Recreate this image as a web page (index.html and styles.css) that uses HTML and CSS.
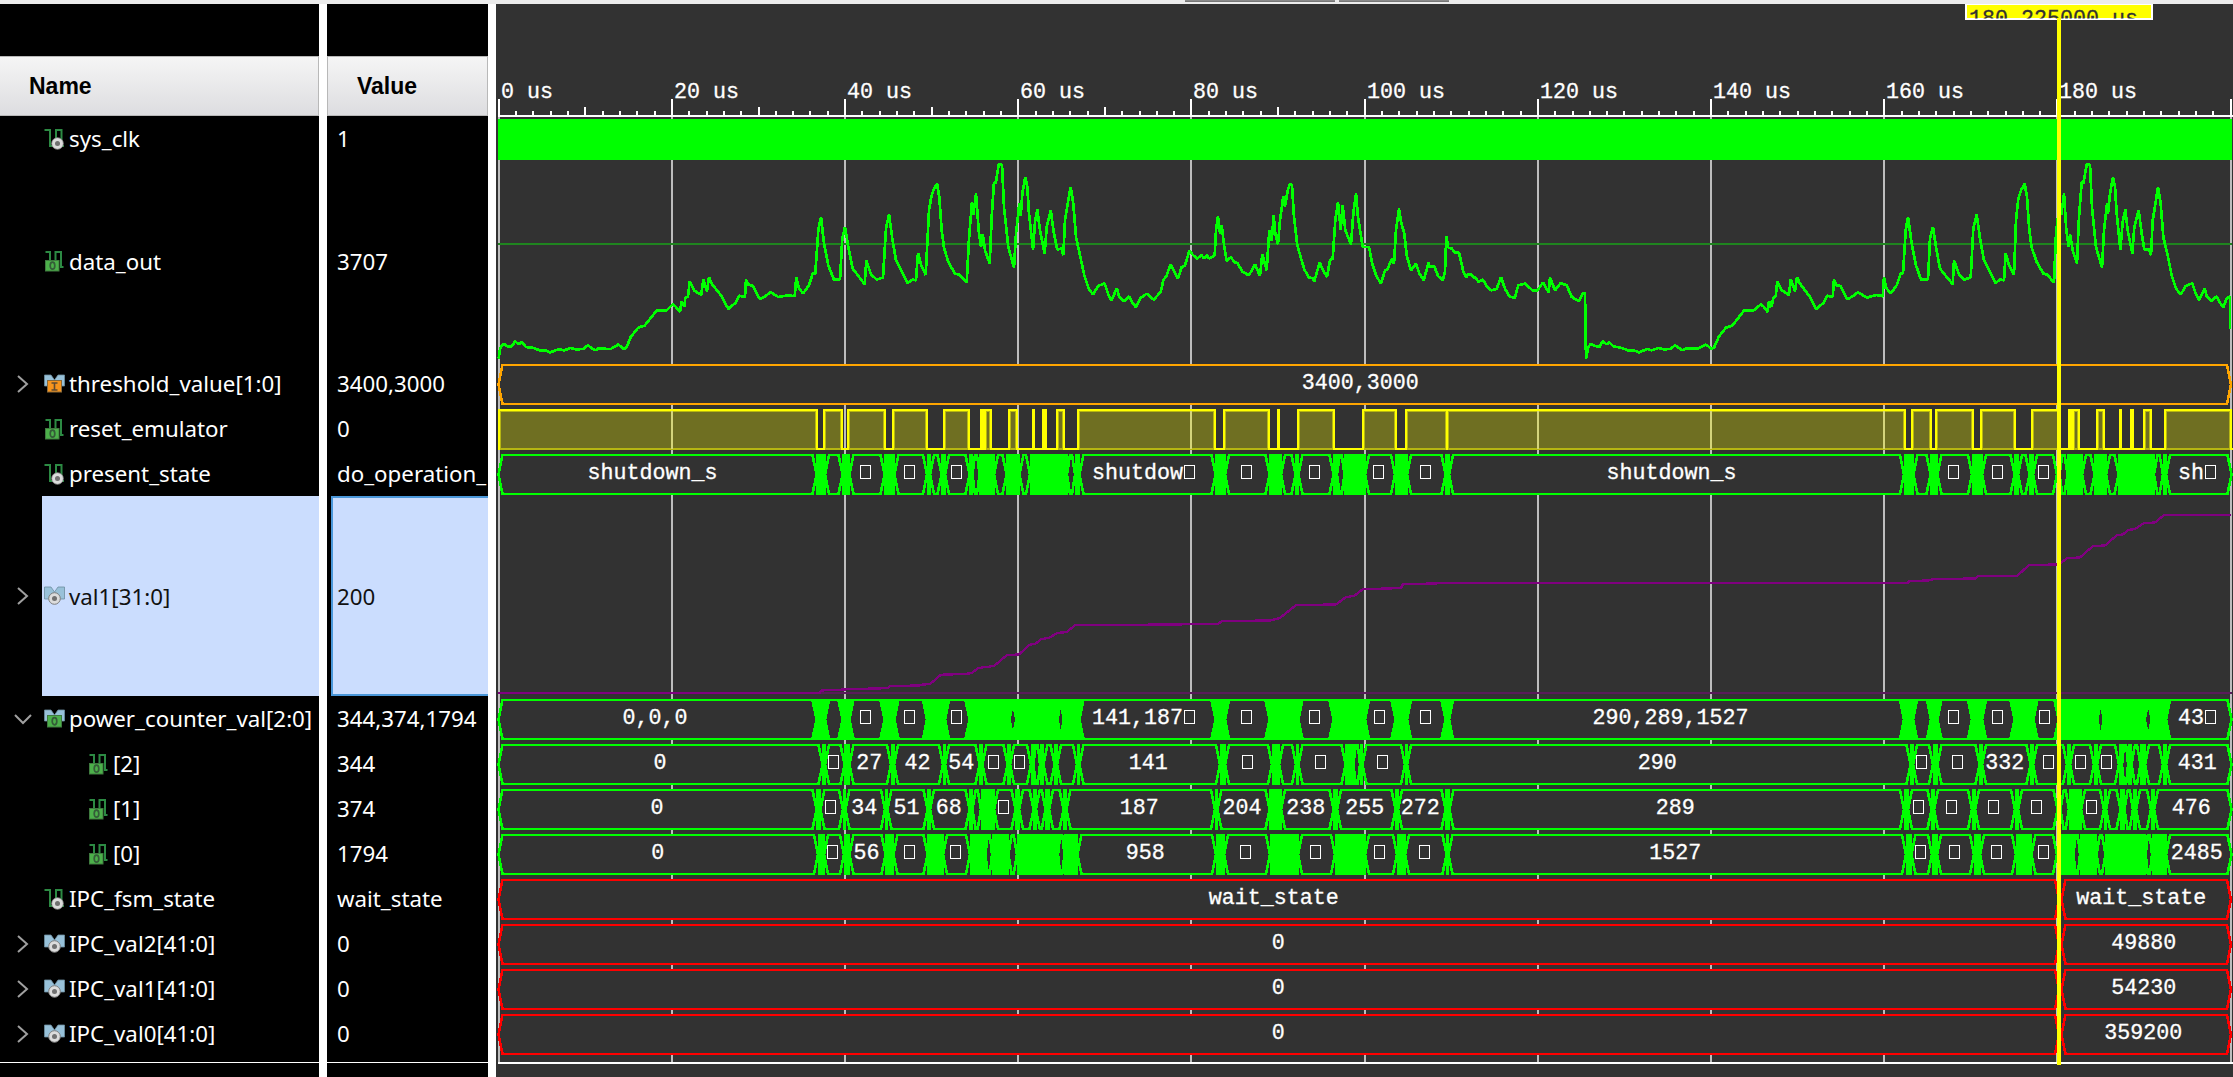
FILE: index.html
```html
<!DOCTYPE html>
<html lang="en">
<head>
<meta charset="utf-8">
<title>Waveform</title>
<link rel="stylesheet" href="styles.css">
</head>
<body>
<svg class="defs" width="0" height="0" aria-hidden="true">
  <symbol id="i-chev" viewBox="0 0 20 20"><path d="M5 2 L14 10 L5 18" fill="none" stroke="#a0a0a0" stroke-width="2"/></symbol>
  <symbol id="i-down" viewBox="0 0 20 20"><path d="M2 6 L10 14 L18 6" fill="none" stroke="#a0a0a0" stroke-width="2"/></symbol>
  <symbol id="i-sig" viewBox="0 0 21 22">
    <path d="M0.5 2 H6 V18 H12 V2 H17.5 V18 H20" fill="none" stroke="#2c8a43" stroke-width="2"/>
    <circle cx="13.5" cy="15.5" r="5.8" fill="#dcdcdc" stroke="#8b8b8b" stroke-width=".8"/><circle cx="13.5" cy="15.5" r="2.5" fill="#707070"/>
  </symbol>
  <symbol id="i-out" viewBox="0 0 21 22">
    <path d="M1.5 2 H6 V14 M11.5 14 V2 H17 V17 H19.5" fill="none" stroke="#2c8a43" stroke-width="2"/>
    <rect x="1.5" y="10.500" width="13.500" height="10.500" fill="#4cb04a" stroke="#3f7a3f"/>
    <ellipse cx="8.500" cy="15.700" rx="2.300" ry="3.500" fill="none" stroke="#345c38" stroke-width="1.700"/>
  </symbol>
  <symbol id="i-bus" viewBox="0 0 21 22">
    <path d="M0.500 2 H7 L10.500 7 L14 2 H20.500 V14 H.5Z" fill="#98c1d9" stroke="#6d8ea0" stroke-width=".8"/>
    <circle cx="10.500" cy="13.500" r="5.800" fill="#dcdcdc" stroke="#7d7d7d" stroke-width="1"/><circle cx="10.500" cy="13.500" r="2.500" fill="#707070"/>
  </symbol>
  <symbol id="i-busin" viewBox="0 0 21 22">
    <path d="M0.500 2 H7 L10.500 7 L14 2 H20.500 V13 H.5Z" fill="#98c1d9" stroke="#6d8ea0" stroke-width=".8"/>
    <rect x="3.500" y="7.500" width="14" height="11.500" fill="#f7941d" stroke="#8a6a3a"/>
    <path d="M7.500 10 H13.500 M10.500 10 V17 M7.500 17 H13.500" fill="none" stroke="#5e4a32" stroke-width="1.600"/>
  </symbol>
  <symbol id="i-busout" viewBox="0 0 21 22">
    <path d="M0.500 2 H7 L10.500 7 L14 2 H20.500 V13 H.5Z" fill="#98c1d9" stroke="#6d8ea0" stroke-width=".8"/>
    <rect x="3.500" y="7.500" width="14" height="11.500" fill="#4cb04a" stroke="#3f7a3f"/>
    <ellipse cx="10.500" cy="13.200" rx="2.300" ry="3.600" fill="none" stroke="#345c38" stroke-width="1.700"/>
  </symbol>
</svg>
<div class="strip"><i class="tab tab-a"></i><i class="tab tab-b"></i></div>
<main class="app">
  <section class="panel names">
    <div class="blank"></div>
    <div class="head">Name</div>
    <div class="rows" id="names"></div>
    <div class="foot"></div>
  </section>
  <section class="panel values">
    <div class="blank"></div>
    <div class="head">Value</div>
    <div class="rows" id="values"></div>
    <div class="foot"></div>
  </section>
  <section class="wave">
    <svg class="grid" id="grid" viewBox="496 4 1737 1073"></svg>
    <div class="ruler"><svg id="ruler" viewBox="496 4 1737 115"></svg></div>
    <div class="waves" id="waves"></div>
    <svg class="cursor" viewBox="1965 4 188 1061">
      <rect x="1965" y="4" width="188" height="16" fill="#fff"/>
      <rect x="1967" y="5" width="184" height="13" fill="#ff0"/>
      <clipPath id="flag"><rect x="1967" y="5" width="184" height="13.500"/></clipPath>
      <g clip-path="url(#flag)"><text class="dark" x="1969" y="25">180.225000 us</text></g>
      <rect x="2057" y="18" width="4" height="1047" fill="#ff0"/>
    </svg>
  </section>
</main>
<script src="wave.js"></script>
</body>
</html>
```
FILE: styles.css
```css
* { box-sizing: border-box; }
body { margin: 0; width: 2233px; height: 1077px; overflow: hidden; background: #fff; display: flex; flex-direction: column; font-family: "Noto Sans", sans-serif; }
.defs { position: absolute; }
.strip { height: 4px; flex: none; background: #ececec; display: flex; gap: 4px; padding-left: 1185px; }
.tab { height: 2px; background: #8a8a8a; border-bottom: 1px solid #777; }
.tab-a { width: 150px; }
.tab-b { width: 110px; }
.app { flex: 1; display: flex; gap: 8px; min-height: 0; }
.panel { background: #000; color: #fff; display: flex; flex-direction: column; flex: none; overflow: hidden; }
.names { width: 319px; }
.values { width: 161px; }
.blank { height: 52px; flex: none; }
.head { height: 60px; flex: none; display: flex; align-items: center; padding: 0 29px; color: #000; font: bold 23px "Liberation Sans", sans-serif; background: linear-gradient(#f5f5f5, #dddde0); border: solid #b8b8b8; border-width: 1px 1px 1px 0; }
.values .head { border-left-width: 1px; }
.rows { height: 947px; flex: none; border-bottom: 1px solid #fff; }
.row { height: 45px; display: flex; align-items: center; font-size: 22.3px; line-height: 45px; white-space: pre; }
.row.tall { height: 200px; }
.names .toggle { width: 42px; flex: none; display: flex; justify-content: center; padding-left: 4px; }
.names .toggle svg { width: 20px; height: 20px; }
.names .label { flex: 1; align-self: stretch; display: flex; align-items: center; gap: 4px; padding-left: 2px; }
.names .child .label { padding-left: 46px; }
.label svg { width: 21px; height: 22px; flex: none; }
.values .row { padding-left: 10px; }
.row.selected { color: #111; }
.names .selected .label { background: #cbddfe; }
.values .row.selected { background: #cbddfe; border: 2px solid #4a97d9; border-right: 0; margin-left: 4px; padding-left: 4px; }
.wave { flex: 1; position: relative; background: #323232; display: flex; flex-direction: column; overflow: hidden; }
.wave svg { display: block; shape-rendering: crispEdges; }
.grid { position: absolute; left: 0; top: 0; width: 1737px; height: 1073px; }
.ruler { height: 112px; flex: none; position: relative; }
.ruler svg { width: 1737px; height: 115px; }
.waves { position: relative; }
.waves svg { width: 1737px; height: 45px; }
.waves svg.tall { height: 200px; }
.cursor { position: absolute; left: 1469px; top: 0; width: 188px; height: 1061px; }
text { font-family: "Liberation Mono", monospace; font-size: 21.67px; fill: #fff; stroke: #fff; stroke-width: 0.3px; white-space: pre; }
text.mid { text-anchor: middle; }
text.dark { fill: #323232; stroke: #323232; }
```
FILE: wave.js
```js
const BOX = '\u25a1';
const signals = [
  ['sys_clk', '1', 'sig'], ['data_out', '3707', 'out', { tall: 1 }],
  ['threshold_value[1:0]', '3400,3000', 'busin', { toggle: 'chev' }],
  ['reset_emulator', '0', 'out'], ['present_state', 'do_operation_', 'sig'],
  ['val1[31:0]', '200', 'bus', { tall: 1, selected: 1, toggle: 'chev' }],
  ['power_counter_val[2:0]', '344,374,1794', 'busout', { toggle: 'down' }],
  ['[2]', '344', 'out', { child: 1 }], ['[1]', '374', 'out', { child: 1 }], ['[0]', '1794', 'out', { child: 1 }],
  ['IPC_fsm_state', 'wait_state', 'sig'], ['IPC_val2[41:0]', '0', 'bus', { toggle: 'chev' }],
  ['IPC_val1[41:0]', '0', 'bus', { toggle: 'chev' }], ['IPC_val0[41:0]', '0', 'bus', { toggle: 'chev' }]
];
const icon = id => `<svg><use href="#i-${id}"/></svg>`;
let names = '', values = '';
for (const [name, value, ic, o = {}] of signals) {
  const cls = 'row' + ['tall', 'selected', 'child'].filter(k => o[k]).map(k => ' ' + k).join('');
  names += `<div class="${cls}"><span class="toggle">${o.toggle ? icon(o.toggle) : ''}</span><span class="label">${icon(ic)}${name}</span></div>`;
  values += `<div class="${cls}">${value}</div>`;
}
document.getElementById('names').innerHTML = names;
document.getElementById('values').innerHTML = values;

// Grid and ruler: ten divisions of 20 us
const rect = (x, y, w, h, f) => `<rect x="${x}" y="${y}" width="${w}" height="${h}" fill="${f}"/>`;
const major = [498, 671, 844, 1017, 1190, 1364, 1537, 1710, 1883, 2056, 2230];
let grid = '', ruler = rect(498, 115, 1735, 2, '#fff');
major.forEach((x, i) => {
  grid += rect(x, 117, 2, 945, '#bdbdbd');
  ruler += rect(x, 99, 2, 17, '#fff');
  if (i === 10) return;
  ruler += `<text x="${x + 3}" y="98">${i * 20} us</text>`;
  for (let k = 1; k < 10; k++) {
    const mid = k === 5 && i < 5;
    ruler += rect(Math.floor(498.2 + 173.2 * i + 17.32 * k), mid ? 107 : 111, 2, mid ? 9 : 5, '#fff');
  }
});
grid += rect(498, 1062, 1735, 2, '#fff');
document.getElementById('grid').innerHTML = grid;
document.getElementById('ruler').innerHTML = ruler;

// A bus is a list of stable spans [start, end, label]; gaps between spans are dense transitions
function bus(spans, color, packed) {
  let s = '';
  spans.forEach(([a, b], i) => {
    const next = spans[i + 1];
    if (next && next[0] - b > 2.5) {
      const e = packed ? 4 : 0;
      s += rect(b - e, 3, next[0] - b + 2 * e, 41, color);
    }
  });
  for (const [a, b, t] of spans) {
    const w = b - a, c = (a + b) / 2;
    if (w < 5) {
      s += rect(a - 3, 3, w + 6, 41, color);
      s += `<polygon points="${a},23.5 ${c},13 ${b},23.5 ${c},34" fill="#323232"/>`;
      continue;
    }
    const d = Math.min(4, w / 2 - 0.5), l = a - 0.5, r = b + 0.5;
    s += `<polygon points="${l},23.5 ${l + d},4 ${r - d},4 ${r},23.5 ${r - d},43 ${l + d},43" fill="#323232" stroke="${color}" stroke-width="2.6"/>`;
  }
  for (const [a, b, t] of spans) {
    if (t === undefined) continue;
    let c = (a + b) / 2;
    const txt = String(t), n = txt.length;
    const box = txt.endsWith(BOX);
    if (!box) { s += `<text class="mid" x="${c - n * 0.5}" y="28">${txt}</text>`; continue; }
    const w = (n - 1) * 13 + 11;
    const x = Math.round(c - w / 2 - (n > 1 ? n * 0.5 : 1.2));
    if (n > 1) s += `<text x="${x - 1}" y="28">${txt.slice(0, -1)}</text>`;
    s += `<rect x="${x + (n - 1) * 13 + 0.5}" y="14.5" width="10" height="13" fill="none" stroke="#fff"/>`;
  }
  return s;
}
const G = '#00ff00', B = BOX;
const present = [[499, 816, 'shutdown_s'], [825.5, 842], [850, 884, B], [895, 926.5, B], [930.5, 941], [945.5, 969, B], [973, 979], [994.5, 1006], [1020, 1029.5], [1067.5, 1074.5], [1080, 1215, 'shutdow' + B], [1225.5, 1269, B], [1281.5, 1295], [1299, 1333, B], [1337.5, 1344], [1365.5, 1394.5, B], [1407.5, 1445, B], [1449.5, 1903.5, 'shutdown_s'], [1914, 1930], [1938, 1971.5, B], [1982.5, 2014, B], [2018.5, 2029], [2033.5, 2056.5, B], [2060, 2067], [2082.5, 2094], [2106.5, 2118], [2154.5, 2162.5], [2166.5, 2231, 'sh' + B]];
const power = [[499, 816, '0,0,0'], [825.5, 842], [850, 884, B], [895, 926.5, B], [945.5, 969, B], [1010.7, 1015], [1059, 1062.5], [1080, 1215, '141,187' + B], [1225.5, 1269, B], [1299, 1333, B], [1365.5, 1395, B], [1407.5, 1445, B], [1449.5, 1903.5, '290,289,1527'], [1913.5, 1930.5], [1938, 1971.5, B], [1982.5, 2014, B], [2034, 2058, B], [2098.7, 2102.5], [2146, 2150.5], [2166.5, 2231, '43' + B]];
const p2 = [[499, 822, 0], [825.5, 844, B], [850, 890.5, 27], [894.5, 942.5, 42], [945.5, 979, 54], [983, 1007, B], [1010.5, 1030.5, B], [1034, 1039.5], [1044, 1054], [1057.5, 1076.5], [1080, 1219.5, 141], [1225.5, 1271.5, B], [1279.5, 1295.5], [1299, 1345, B], [1354, 1359.5], [1363, 1404.5, B], [1407.5, 1910, 290], [1913.5, 1932.5, B], [1938, 1979, B], [1982.5, 2030, 332], [2033.5, 2066.5, B], [2070.5, 2093.5, B], [2097.5, 2118.5, B], [2122.5, 2127.6], [2132, 2140], [2145.5, 2162.5], [2166.5, 2231, 431]];
const p1 = [[499, 816, 0], [821, 842.5, B], [846, 884.5, 34], [888, 927, 51], [930.5, 969, 68], [973, 980.5], [994.5, 1015, B], [1019.5, 1033], [1036.5, 1045], [1049.5, 1063], [1067, 1214.5, 187], [1218, 1269, 204], [1281.5, 1333, 238], [1337.5, 1395, 255], [1398.5, 1445, 272], [1450, 1903.5, 289], [1908.5, 1931, B], [1934.5, 1971.5, B], [1975.5, 2014.5, B], [2018.5, 2057, B], [2061, 2068.5], [2081.5, 2103.5, B], [2106.5, 2120], [2125, 2132.5], [2136.5, 2150.5], [2154.5, 2231, 476]];
const p0 = [[499, 817.5, 0], [824.5, 843.5, B], [850, 885, 56], [894, 927, B], [943.5, 969.5, B], [986, 991.5], [1009, 1016.5], [1058.5, 1064], [1078, 1215.5, 958], [1224.5, 1269.5, B], [1298.5, 1334.5, B], [1365.5, 1396.5, B], [1405.5, 1446, B], [1449, 1905.5, 1527], [1912, 1931.5, B], [1937.5, 1973.5, B], [1980.5, 2015.5, B], [2032, 2056.5, B], [2074, 2079.5], [2097, 2105], [2146.2, 2151.5], [2166.5, 2231, 2485]];

function pulses(spans) {
  let s = rect(498, 42, 1735, 2, '#ffff00');
  for (const [a, b] of spans) {
    const w = b - a;
    s += rect(a, 3, w, 41, '#ffff00');
    if (w > 6) s += rect(a + 2, 5, w - 4, 39, '#b6b612') + rect(a + 3, 6, w - 6, 36, '#6f6f22');
  }
  major.forEach(x => { if (spans.some(([a, b]) => x > a + 3 && x + 2 < b - 3)) s += rect(x, 5, 2, 38, '#d4d47c'); });
  return s;
}
const reset = [[498, 818], [823, 843], [847, 886], [892, 928], [943, 970], [980, 985], [984, 992], [1008, 1018], [1032, 1035], [1042, 1047], [1056, 1065], [1077, 1216], [1223, 1270], [1277, 1280], [1297, 1335], [1362, 1397], [1405, 1448], [1446, 1906], [1911, 1932], [1935, 1974], [1980, 2016], [2031, 2060], [2068, 2073], [2072, 2080], [2096, 2105], [2119, 2122], [2130, 2134], [2143, 2152], [2164, 2232]];

// Analog samples, three units per pixel, grouped by starting column
const samples = [
  [490, '26,1075 30,1045 40,1030 52,1038 66,1038 75,1023 86,1032 95,1026 108,1040 132,1043 148,1050 166,1050 180,1056 206,1047 222,1050 242,1043 258,1047 280,1046 293,1035 315,1050 325,1045 362,1046 385,1033 402,1046 410,1040 422,1010 445,982 464,976 500,931 530,930 548,912 556,918 570,935 575,903 583,920 586,893 594,888 599,843 612,870 634,884 640,837 651,873 657,831 665,850 695,888 715,926 738,906 748,886 765,890 768,838 774,852 788,857 810,897 825,888 842,876 865,890 890,886 914,887 919,831 926,862 939,880 957,855 968,820 976,820 985,690 993,650 1002,730 1015,795 1032,838 1050,838 1057,715 1065,680 1075,740 1088,805 1124,852 1129,780 1143,822 1160,838 1179,832 1188,685 1197,642 1207,715 1218,780 1253,848 1268,838 1278,840 1284,758 1294,795 1307,824 1317,630 1324,590 1330,570 1341,550'],
  [930, '28,590 35,690 42,742 55,785 75,820 88,823 110,847 117,715 126,605 130,645 138,580 146,690 153,740 158,702 165,750 179,790 185,650 192,545 197,550 206,493 216,493 222,620 235,740 252,802 258,700 268,610 272,648 277,580 286,530 292,560 297,640 309,748 315,665 322,628 330,690 344,760 350,680 362,630 372,700 382,748 395,745 400,765 405,660 415,600 422,560 430,610 438,710 450,765 463,825 476,865 489,883 504,857 524,849 534,880 544,900 561,864 567,888 582,903 598,888 606,905 617,920 632,893 650,880 671,898 692,875 700,840 710,825 722,792 744,835 755,800 765,795 778,752 790,765 801,775 815,765 822,775 830,765 838,775 854,765 858,690 864,648 870,700 875,675 883,740 890,782 903,770 912,785 922,788 938,815 957,825 975,792 990,827 997,762 1010,810 1018,690 1025,722 1031,645 1036,700 1044,732 1050,660 1060,588 1065,618 1073,570 1080,550 1086,555 1092,650 1102,735 1122,805 1136,832 1147,833 1153,843 1169,786 1176,805 1191,830 1200,780 1208,775 1216,660 1224,605 1232,688 1238,616 1246,690 1263,732 1270,640 1278,580 1284,650 1298,740 1317,740 1327,790 1338,825'],
  [1370, '33,850 45,810 52,808 66,775 72,790 78,690 87,625 93,665 103,700 110,765 123,810 138,790 148,820 161,840 176,786 178,798 193,798 205,828 218,840 225,815 229,707 235,742 246,745 253,757 267,757 280,813 289,830 293,822 304,822 310,832 318,832 325,845 339,838 350,858 363,870 380,866 393,830 405,865 418,888 434,893 445,855 466,850 487,870 503,870 519,846 536,877 540,832 547,850 555,870 572,848 590,855 605,890 627,903 640,878 645,878 648,1075 655,1040 663,1030 672,1036 689,1040 697,1023 710,1032 718,1026 730,1038 756,1043 773,1050 790,1050 807,1056 832,1046 845,1050 866,1043 882,1047 900,1046 916,1035 936,1050 948,1044 985,1045 1008,1033 1025,1046 1033,1040 1047,1008 1068,982 1087,976 1122,931 1152,930 1173,912 1180,918 1193,935 1197,903 1205,920 1210,893 1217,888 1222,843 1235,870 1257,884 1262,837 1275,873 1281,831 1290,850 1320,890'],
  [1810, '19,926 42,906 52,886 68,890 72,838 80,855 92,857 112,897 128,888 144,876 170,892 200,884 218,888 222,831 228,862 242,880 260,855 272,820 279,820 287,690 294,650 305,730 318,795 333,838 354,838 360,715 369,680 378,740 390,805 428,852 432,780 447,822 463,838 482,832 490,685 500,642 510,715 522,780 556,848 571,838 582,840 587,758 597,795 612,824 618,660 625,595 633,570 644,550 651,590 658,690 665,742 680,785 700,820 712,823 732,847 738,700 749,605 754,645 762,580 769,690 776,740 780,702 788,750 801,790 807,650 815,545 820,550 830,493 840,493 846,620 858,740 876,802 882,690 891,610 894,640 900,580 909,530 915,560 920,640 931,748 938,665 946,628 953,690 967,760 973,680 986,630 995,700 1003,748 1018,748 1023,765 1028,660 1038,600 1044,560 1052,610 1060,710 1073,765 1085,825 1098,865 1112,883 1127,857 1147,849 1157,880 1167,900 1184,864 1190,888 1204,903 1220,888 1228,905 1240,920 1250,895 1260,888 1260,985']
];
const analog = samples.flatMap(([o, s]) => s.split(' ').map(p => { const [x, y] = p.split(','); return (o + x / 3).toFixed(1) + ',' + (y / 3 + 0.3).toFixed(1); })).join(' ');
const line = (pts, c, w) => `<polyline points="${pts}" fill="none" stroke="${c}" stroke-width="${w}" stroke-linejoin="bevel"/>`;
const val1 = '498,693 820,693 821,690.5 845,689.5 846,689 878,688.5 888,688 890,686 919,685.5 922,684.7 930,684 941,674.7 965,674 972,673 978,668 994,666 1007,655 1019,654.500 1029,645 1036,643.500 1041,639 1049,638 1057,633 1067,632 1075,625 1181,624.500 1182,624 1218,624 1222,621 1270,620.500 1280,618 1296,605 1336,604.500 1346,597 1354,596 1363,589 1389,588.500 1401,588 1403,584 1436,583.500 1437,583 1908,583 1909,581 1928,580.500 1934,579 1976,578.500 1978,576 2017,576 2029,565 2057,564.500 2061,563 2067,558 2080,557.500 2093,546 2105,545.500 2117,535 2123,534.500 2128,530 2135,529 2144,523 2155,522.500 2164,515 2231,515';
const ipc = v => bus([[499, 2058.5, v === 'wait_state' ? v : '0'], [2062, 2230.5, v]].map((x, i) => x), '#ff0000');
const row = s => `<svg viewBox="496 0 1737 45">${s}</svg>`;
const tall = (y, s) => `<svg class="tall" viewBox="496 ${y} 1737 200">${s}</svg>`;
// The state buses of the IPC block change once, under the cursor
const ipcRow = v => ipc(v).replace(/<rect[^>]*fill="#ff0000"\/>/, '');
document.getElementById('waves').innerHTML = [
  row(rect(498, 3, 1734, 41, G)),
  tall(161, rect(498, 243, 1734, 2, '#1f851f') + line(analog, G, 2.7)),
  row(bus([[499, 2230.5, '3400,3000']], '#ffa500')),
  row(pulses(reset)), row(bus(present, G)),
  tall(496, rect(498, 692, 1734, 2, '#5a1a5a') + line(val1, '#800080', 2.3)),
  row(bus(power, G, true)), row(bus(p2, G)), row(bus(p1, G)), row(bus(p0, G)),
  row(ipcRow('wait_state')), row(ipcRow('49880')), row(ipcRow('54230')), row(ipcRow('359200'))
].join('');
```
